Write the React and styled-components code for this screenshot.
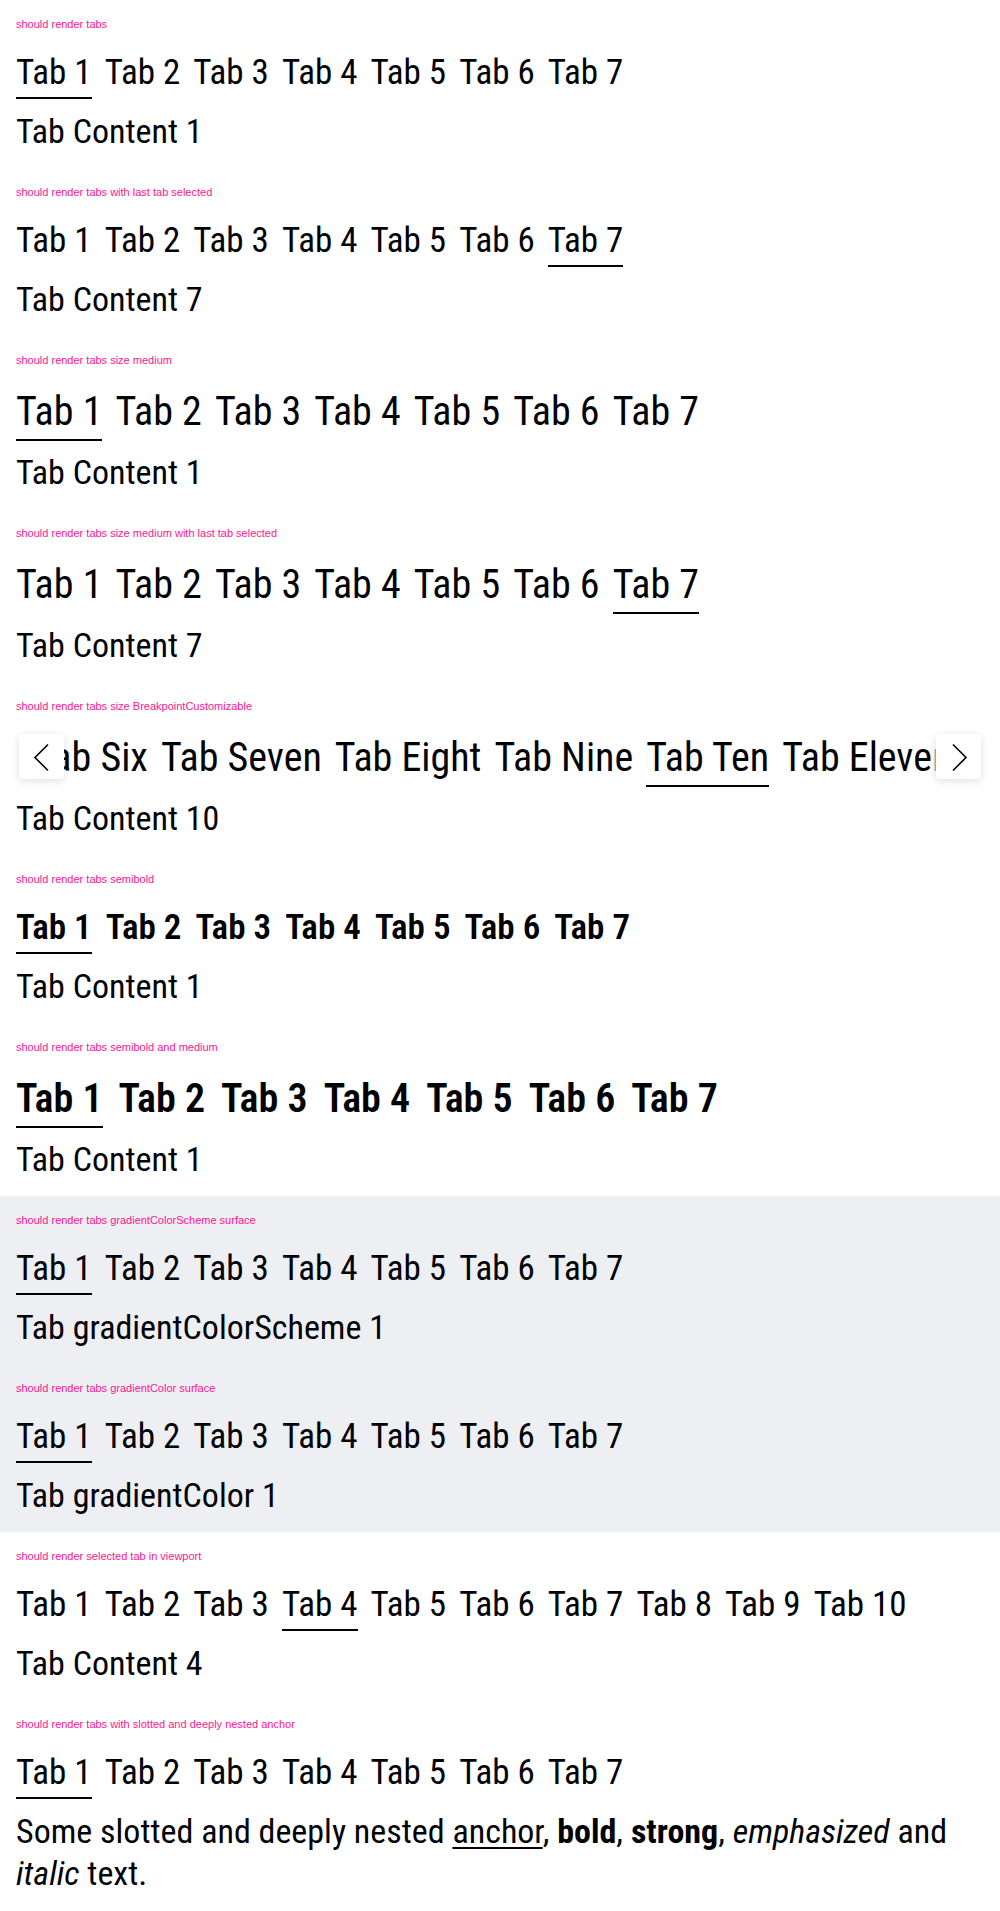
import React, { useLayoutEffect, useRef } from 'react';
import styled, { createGlobalStyle } from 'styled-components';

const FONT = `"Roboto Condensed", "Liberation Sans Narrow", "Arial Narrow", sans-serif`;
const INK = '#010205';

const GlobalStyle = createGlobalStyle`
  html, body { margin: 0; padding: 0; background: #fff; }
  body { font-family: ${FONT}; color: ${INK}; }
  * { box-sizing: border-box; }
`;

const Surface = styled.div`
  background: ${(p) => (p.$gray ? '#eeeff2' : 'transparent')};
`;

const Section = styled.section`
  padding: 16px;
`;

const Title = styled.p`
  margin: 0;
  font-family: "Liberation Sans", Arial, sans-serif;
  font-size: 11px;
  line-height: 16px;
  color: #ff1493;
`;

const TabsBar = styled.div`
  position: relative;
  margin-top: 16px;
`;

const Scroller = styled.div`
  position: relative;
  display: flex;
  gap: ${(p) => p.$gap}px;
  overflow: hidden;
  padding-bottom: 2px;
`;

const Tab = styled.button`
  position: relative;
  flex: none;
  margin: 0;
  padding: 0;
  border: 0;
  background: transparent;
  font-family: ${FONT};
  font-size: ${(p) => (p.$medium ? 40 : 35)}px;
  line-height: ${(p) => (p.$medium ? 55 : 49)}px;
  font-weight: ${(p) => (p.$bold ? 600 : 400)};
  color: ${INK};
  white-space: nowrap;
  cursor: pointer;

  &::after {
    content: '';
    position: absolute;
    left: 0;
    right: 0;
    bottom: -2px;
    height: 2px;
    background: ${INK};
    display: ${(p) => (p.$selected ? 'block' : 'none')};
  }
`;

const Fade = styled.div`
  position: absolute;
  top: 0;
  bottom: 2px;
  ${(p) => (p.$side === 'left' ? 'left: 0;' : 'right: 0;')}
  width: ${(p) => (p.$side === 'left' ? 48 : 54)}px;
  background: linear-gradient(
    ${(p) => (p.$side === 'left' ? 'to right' : 'to left')},
    #fff 85%,
    rgba(255, 255, 255, 0)
  );
  z-index: 1;
`;

const ScrollButton = styled.button`
  position: absolute;
  top: 4px;
  ${(p) => (p.$side === 'left' ? 'left: 3px;' : 'right: 3px;')}
  width: 45px;
  height: 45px;
  padding: 0;
  border: 0;
  border-radius: 4px;
  background: #fff;
  box-shadow: 0 2px 8px rgba(0, 0, 0, 0.13);
  display: flex;
  align-items: center;
  justify-content: center;
  cursor: pointer;
`;

const Content = styled.div`
  margin-top: ${(p) => (p.$medium ? 10 : 11)}px;
  font-family: ${FONT};
  font-size: 34px;
  line-height: 42px;
  color: ${INK};

  a {
    color: inherit;
    text-decoration: underline;
    text-decoration-thickness: 2px;
    text-underline-offset: 4px;
  }
`;

const Chevron = ({ dir }) => (
  <svg width="45" height="45" viewBox="0 0 45 45" aria-hidden="true">
    <path
      d={dir === 'left' ? 'M29 10.5 L16 23.5 L29 36.5' : 'M17 10.5 L30 23.5 L17 36.5'}
      fill="none"
      stroke={INK}
      strokeWidth="1.6"
    />
  </svg>
);

const nums = (n) => Array.from({ length: n }, (_, i) => `Tab ${i + 1}`);
const words = [
  'Tab One', 'Tab Two', 'Tab Three', 'Tab Four', 'Tab Five', 'Tab Six',
  'Tab Seven', 'Tab Eight', 'Tab Nine', 'Tab Ten', 'Tab Eleven', 'Tab Twelve',
];

function TabsRow({ tabs, selected, medium, bold, scroll, anchorX }) {
  const scrollerRef = useRef(null);
  const selRef = useRef(null);
  const gap = bold ? (medium ? 16 : 14) : 13;

  useLayoutEffect(() => {
    if (scroll && scrollerRef.current && selRef.current) {
      scrollerRef.current.scrollLeft = selRef.current.offsetLeft - anchorX;
    }
  }, [scroll, anchorX]);

  return (
    <TabsBar>
      <Scroller ref={scrollerRef} $gap={gap}>
        {tabs.map((t, i) => (
          <Tab
            key={t}
            ref={i === selected ? selRef : undefined}
            $medium={medium}
            $bold={bold}
            $selected={i === selected}
          >
            {t}
          </Tab>
        ))}
      </Scroller>
      {scroll && (
        <>
          <Fade $side="left">
            <ScrollButton $side="left" aria-label="scroll left">
              <Chevron dir="left" />
            </ScrollButton>
          </Fade>
          <Fade $side="right">
            <ScrollButton $side="right" aria-label="scroll right">
              <Chevron dir="right" />
            </ScrollButton>
          </Fade>
        </>
      )}
    </TabsBar>
  );
}

function Story({ title, tabs, selected, medium, bold, scroll, anchorX, children }) {
  return (
    <Section>
      <Title>{title}</Title>
      <TabsRow
        tabs={tabs}
        selected={selected}
        medium={medium}
        bold={bold}
        scroll={scroll}
        anchorX={anchorX}
      />
      <Content $medium={medium}>{children}</Content>
    </Section>
  );
}

export default function App() {
  return (
    <>
      <GlobalStyle />
      <Surface>
        <Story title="should render tabs" tabs={nums(7)} selected={0}>
          Tab Content 1
        </Story>
        <Story title="should render tabs with last tab selected" tabs={nums(7)} selected={6}>
          Tab Content 7
        </Story>
        <Story title="should render tabs size medium" tabs={nums(7)} selected={0} medium>
          Tab Content 1
        </Story>
        <Story
          title="should render tabs size medium with last tab selected"
          tabs={nums(7)}
          selected={6}
          medium
        >
          Tab Content 7
        </Story>
        <Story
          title="should render tabs size BreakpointCustomizable"
          tabs={words}
          selected={9}
          medium
          scroll
          anchorX={630}
        >
          Tab Content 10
        </Story>
        <Story title="should render tabs semibold" tabs={nums(7)} selected={0} bold>
          Tab Content 1
        </Story>
        <Story title="should render tabs semibold and medium" tabs={nums(7)} selected={0} bold medium>
          Tab Content 1
        </Story>
      </Surface>
      <Surface $gray>
        <Story title="should render tabs gradientColorScheme surface" tabs={nums(7)} selected={0}>
          Tab gradientColorScheme 1
        </Story>
        <Story title="should render tabs gradientColor surface" tabs={nums(7)} selected={0}>
          Tab gradientColor 1
        </Story>
      </Surface>
      <Surface>
        <Story title="should render selected tab in viewport" tabs={nums(10)} selected={3}>
          Tab Content 4
        </Story>
        <Story title="should render tabs with slotted and deeply nested anchor" tabs={nums(7)} selected={0}>
          Some slotted and deeply nested <a href="#anchor">anchor</a>, <b>bold</b>,{' '}
          <strong>strong</strong>, <em>emphasized</em> and <i>italic</i> text.
        </Story>
      </Surface>
    </>
  );
}
